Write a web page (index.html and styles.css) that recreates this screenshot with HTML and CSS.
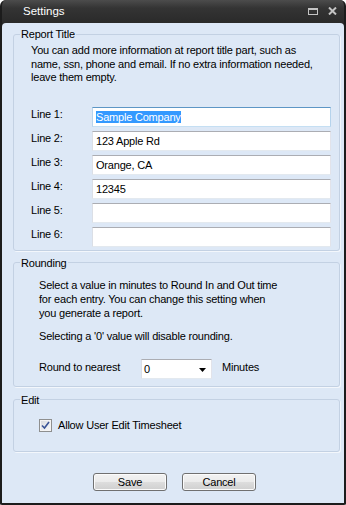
FILE: index.html
```html
<!DOCTYPE html>
<html lang="en">
<head>
    <meta charset="UTF-8">
    <title>Settings</title>
    <link rel="stylesheet" href="styles.css">
</head>
<body>
    <div class="window">
        <div class="titlebar">
            <span class="title">Settings</span>
            <div class="controls">
                <svg class="ctl-box" width="10" height="7" viewBox="0 0 10 7">
                    <rect x="0" y="0" width="10" height="2" fill="#c4c4c4"/>
                    <rect x="0.5" y="0.5" width="9" height="6" fill="none" stroke="#c4c4c4"/>
                </svg>
                <svg class="ctl-close" width="9" height="8" viewBox="0 0 9 8">
                    <path d="M1 0.5 L8 7.5 M8 0.5 L1 7.5" stroke="#c4c4c4" stroke-width="2"/>
                </svg>
            </div>
        </div>

        <div class="client">
            <fieldset class="group group-report">
                <legend>Report Title</legend>
                <p class="note">You can add more information at report title part, such as<br>name, ssn, phone and email. If no extra information needed,<br>leave them empty.</p>
                <div class="lines">
                    <div class="line-row"><label for="line1">Line 1:</label><input id="line1" type="text" value="Sample Company"></div>
                    <div class="line-row"><label for="line2">Line 2:</label><input id="line2" type="text" value="123 Apple Rd"></div>
                    <div class="line-row"><label for="line3">Line 3:</label><input id="line3" type="text" value="Orange, CA"></div>
                    <div class="line-row"><label for="line4">Line 4:</label><input id="line4" type="text" value="12345"></div>
                    <div class="line-row"><label for="line5">Line 5:</label><input id="line5" type="text" value=""></div>
                    <div class="line-row"><label for="line6">Line 6:</label><input id="line6" type="text" value=""></div>
                </div>
            </fieldset>

            <fieldset class="group group-rounding">
                <legend>Rounding</legend>
                <p class="round-note">Select a value in minutes to Round In and Out time<br>for each entry. You can change this setting when<br>you generate a report.</p>
                <p class="round-warn">Selecting a '0' value will disable rounding.</p>
                <div class="round-row">
                    <span class="round-label">Round to nearest</span>
                    <div class="combo">
                        <span class="combo-value">0</span>
                        <svg class="combo-arrow" width="7" height="4" viewBox="0 0 7 4">
                            <path d="M0 0 H7 L3.5 4 Z" fill="#000"/>
                        </svg>
                    </div>
                    <span class="round-unit">Minutes</span>
                </div>
            </fieldset>

            <fieldset class="group group-edit">
                <legend>Edit</legend>
                <label class="check-row">
                    <span class="check">
                        <svg width="9" height="9" viewBox="0 0 9 9">
                            <path d="M1 4.5 L3.5 7 L8 1" fill="none" stroke="#3a5496" stroke-width="1.6"/>
                        </svg>
                    </span>
                    <span>Allow User Edit Timesheet</span>
                </label>
            </fieldset>

            <div class="buttons">
                <button class="btn">Save</button>
                <button class="btn">Cancel</button>
            </div>
        </div>
    </div>

    <script>
        // first line starts out selected, like the dialog does
        var first = document.getElementById('line1');
        first.focus();
        first.select();
    </script>
</body>
</html>
```

FILE: styles.css
```css
* {
    margin: 0;
    padding: 0;
    box-sizing: border-box;
}

body {
    width: 346px;
    height: 505px;
    overflow: hidden;
    background: #ffffff;
    font-family: "Liberation Sans", Arial, sans-serif;
    font-size: 11px;
    letter-spacing: -0.2px;
    color: #000;
}

.window {
    height: 505px;
    display: flex;
    flex-direction: column;
    background: #262626;
    border: 2px solid #1c1c1c;
    border-top: none;
    border-radius: 6px 6px 2px 2px;
    overflow: hidden;
}

.titlebar {
    height: 23px;
    flex-shrink: 0;
    display: flex;
    align-items: center;
    padding: 0 7px 1px 21px;
    background: linear-gradient(#4c4c4c 0%, #343434 35%, #2a2a2a 100%);
    color: #fff;
}

.title {
    font-size: 11.5px;
    letter-spacing: 0;
}

.controls {
    margin-left: auto;
    display: flex;
    align-items: center;
    gap: 10px;
}

.client {
    flex: 1;
    display: flex;
    flex-direction: column;
    padding: 4px 4px 0 11px;
    background: #dde8f6;
    border-radius: 4px 4px 0 0;
}

.group {
    border: 1px solid #c3d1e3;
    border-radius: 3px;
    box-shadow: 1px 1px 0 #f3f7fc;
}

.group legend {
    margin-left: 6px;
    padding: 0 1px;
    line-height: 14px;
}

/* report title */
.note {
    margin: 3px 0 0 17px;
    line-height: 13.5px;
}

.lines {
    margin: 22px 0 3px 0;
}

.line-row {
    display: flex;
    height: 20px;
    margin-bottom: 4px;
}

.line-row:last-child {
    margin-bottom: 0;
}

.line-row label {
    width: 61px;
    margin-left: 17px;
    line-height: 14px;
}

.line-row input {
    width: 239px;
    height: 20px;
    padding: 0 3px;
    border: 1px solid;
    border-color: #abadb3 #e2e3ea #e3e9ef #dbdfe6;
    background: #fff;
    font-family: inherit;
    font-size: 11px;
    letter-spacing: -0.2px;
    color: #000;
    outline: none;
}

.line-row input:focus {
    border-color: #5d96c5 #b5d3ec #c5dff3 #b9d4ec;
}

.line-row input::selection {
    background: #3399ff;
    color: #fff;
}

/* rounding */
.group-rounding {
    margin-top: 5px;
}

.round-note {
    margin: 8px 0 0 25px;
    line-height: 14px;
}

.round-warn {
    margin: 9px 0 0 25px;
    line-height: 14px;
}

.round-row {
    display: flex;
    align-items: flex-start;
    margin: 16px 0 7px 25px;
    height: 20px;
}

.round-label {
    width: 102px;
    padding-top: 1px;
    line-height: 14px;
}

.combo {
    width: 71px;
    height: 20px;
    display: flex;
    align-items: center;
    padding: 0 5px 0 2px;
    background: #fff;
    border: 1px solid;
    border-color: #abadb3 #e2e3ea #e3e9ef #dbdfe6;
}

.combo-arrow {
    margin-left: auto;
    margin-top: 2px;
}

.round-unit {
    margin-left: 10px;
    padding-top: 1px;
    line-height: 14px;
}

/* edit */
.group-edit {
    margin-top: 6px;
}

.check-row {
    display: flex;
    align-items: center;
    gap: 6px;
    margin: 12px 0 19px 25px;
    line-height: 13px;
}

.check {
    width: 13px;
    height: 13px;
    display: flex;
    align-items: center;
    justify-content: center;
    border: 1px solid #8e8f8f;
    background: linear-gradient(135deg, #d6d8dc 0%, #eceef0 60%, #f8f8f8 100%);
    box-shadow: inset 0 0 0 1px #f4f4f4;
}

/* buttons */
.buttons {
    display: flex;
    gap: 15px;
    margin-top: 21px;
    padding-left: 80px;
}

.btn {
    width: 74px;
    height: 18px;
    border: 1px solid #707070;
    border-radius: 3px;
    background: linear-gradient(#f2f2f2 0%, #ebebeb 50%, #dddddd 51%, #cfcfcf 100%);
    box-shadow: inset 0 0 0 1px #fbfbfb;
    font-family: inherit;
    font-size: 11px;
    letter-spacing: -0.2px;
    color: #000;
}
```
